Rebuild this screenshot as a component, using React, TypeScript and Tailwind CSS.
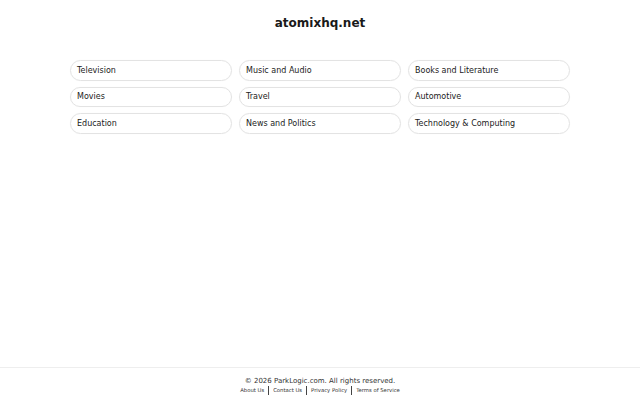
const categories = [
  "Television",
  "Music and Audio",
  "Books and Literature",
  "Movies",
  "Travel",
  "Automotive",
  "Education",
  "News and Politics",
  "Technology & Computing",
];

const links = ["About Us", "Contact Us", "Privacy Policy", "Terms of Service"];

export default function App() {
  return (
    <div className="min-h-screen flex flex-col bg-white text-[#222] font-['DejaVu_Sans',sans-serif]">
      <main className="flex-1">
        <h1 className="pt-[15px] text-center text-[12px] font-bold text-[#1a1a1a] leading-[16px]">
          atomixhq.net
        </h1>
        <div className="mx-auto mt-[29px] grid w-[500px] grid-cols-3 gap-x-[7px] gap-y-[6px]">
          {categories.map((c) => (
            <a
              key={c}
              href="#"
              className="flex h-[20.5px] items-center rounded-full border border-[#e3e3e3] px-[6px] pt-px text-[8px] text-[#222] shadow-[0_0_1px_rgba(0,0,0,0.05)]"
            >
              {c}
            </a>
          ))}
        </div>
      </main>
      <footer className="border-t border-[#eeeeee] pt-[8px] pb-[5px] text-center">
        <p className="text-[7px] leading-[10px] text-[#333]">© 2026 ParkLogic.com. All rights reserved.</p>
        <div className="flex items-center justify-center text-[5.3px] leading-[9px] text-[#333]">
          {links.map((l, i) => (
            <span key={l} className="flex items-center">
              {i > 0 && <span className="mx-[4px] h-[9px] w-px bg-[#444]" />}
              <a href="#">{l}</a>
            </span>
          ))}
        </div>
      </footer>
    </div>
  );
}
